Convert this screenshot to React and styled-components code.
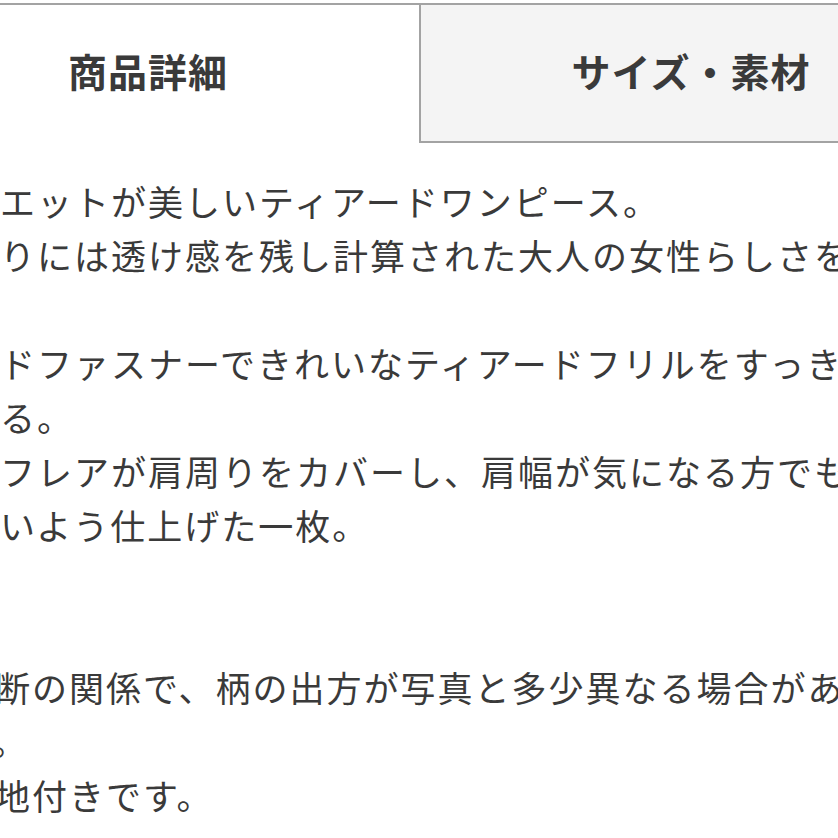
import React from "react";
import styled, { createGlobalStyle } from "styled-components";

const GlobalStyle = createGlobalStyle`
  html, body {
    margin: 0;
    padding: 0;
    background: #ffffff;
    overflow: hidden;
  }
  body {
    font-family: "Noto Sans CJK JP", "Noto Sans", sans-serif;
    color: #3a3a3a;
  }
`;

const Page = styled.div`
  width: 1084px;
  margin: 3px 0 0 -123px;
`;

const TabBar = styled.div`
  display: grid;
  grid-template-columns: 1fr 1fr;
  border-top: 2px solid #a3a3a3;
`;

const Tab = styled.button`
  height: 138px;
  margin: 0;
  padding: 0 0 ${(p) => (p.$active ? "8px" : "6px")};
  border: none;
  border-left: ${(p) => (p.$active ? "none" : "2px solid #a3a3a3")};
  border-bottom: ${(p) => (p.$active ? "none" : "2px solid #a3a3a3")};
  background: ${(p) => (p.$active ? "#ffffff" : "#f4f4f4")};
  font-family: "Noto Sans CJK JP", "Noto Sans", sans-serif;
  font-size: 39px;
  font-weight: 700;
  letter-spacing: 1px;
  color: #3a3a3a;
  display: flex;
  align-items: center;
  justify-content: center;
  cursor: pointer;
`;

const Description = styled.div`
  padding: 31px 0 0 49px;
`;

const Paragraph = styled.div`
  margin-left: ${(p) => p.$indent || 0}px;
`;

const Line = styled.p`
  margin: 0;
  height: 54px;
  font-size: 35px;
  line-height: 54px;
  letter-spacing: 2px;
  white-space: nowrap;
`;

const Spacer = styled.div`
  height: ${(p) => p.$lines * 54}px;
`;

const intro = [
  "シルエットが美しいティアードワンピース。",
  "袖周りには透け感を残し計算された大人の女性らしさを演出。",
];

const detail = [
  "背面ドファスナーできれいなティアードフリルをすっきりと見せる。",
  "見せる。",
  "肩のフレアが肩周りをカバーし、肩幅が気になる方でも着やすい",
  "やすいよう仕上げた一枚。",
];

const notes = [
  "※裁断の関係で、柄の出方が写真と多少異なる場合がありま",
  "ます。",
  "※裏地付きです。",
];

export default function App() {
  const [tab, setTab] = React.useState(0);
  return (
    <>
      <GlobalStyle />
      <Page>
        <TabBar>
          <Tab $active={tab === 0} onClick={() => setTab(0)}>
            商品詳細
          </Tab>
          <Tab $active={tab === 1} onClick={() => setTab(1)}>
            サイズ・素材
          </Tab>
        </TabBar>
        <Description>
          <Paragraph>
            {intro.map((t) => (
              <Line key={t}>{t}</Line>
            ))}
          </Paragraph>
          <Spacer $lines={1} />
          <Paragraph>
            {detail.map((t) => (
              <Line key={t}>{t}</Line>
            ))}
          </Paragraph>
          <Spacer $lines={2} />
          <Paragraph $indent={-5}>
            {notes.map((t) => (
              <Line key={t}>{t}</Line>
            ))}
          </Paragraph>
        </Description>
      </Page>
    </>
  );
}
